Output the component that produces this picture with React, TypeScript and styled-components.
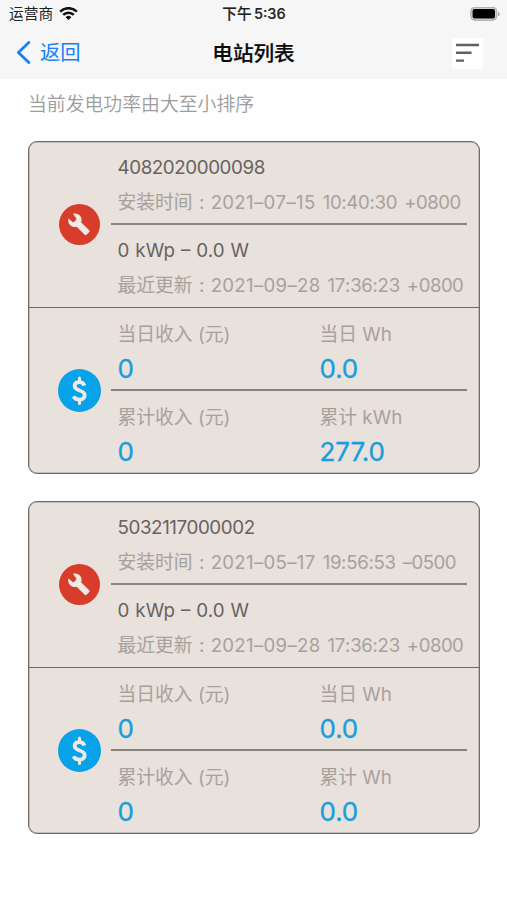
import React from "react";
import styled, { createGlobalStyle } from "styled-components";

const GlobalStyle = createGlobalStyle`
  * { box-sizing: border-box; }
  body {
    margin: 0;
    background: #fefefe;
    font-family: Inter, "Noto Sans CJK SC", sans-serif;
  }
`;

const Screen = styled.div`
  width: 507px;
  height: 900px;
  overflow: hidden;
`;

const Header = styled.header`
  height: 79px;
  background: #f6f6f6;
`;

const StatusBar = styled.div`
  height: 27px;
  padding: 0 7px 0 9px;
  display: grid;
  grid-template-columns: 1fr auto 1fr;
  align-items: center;
  font-size: 14.7px;
  line-height: 27px;
  color: #222;
`;

const Carrier = styled.div`
  display: flex;
  align-items: center;
  gap: 6px;
  font-weight: 400;
`;

const Clock = styled.div`
  font-weight: 500;
  font-size: 14.6px;
  word-spacing: -1.5px;
  line-height: 28px;
  padding-right: 1px;
  -webkit-text-stroke: 0.15px;
`;

const Battery = styled.svg`
  justify-self: end;
`;

const NavBar = styled.nav`
  height: 52px;
  padding: 0 24px 0 16px;
  display: grid;
  grid-template-columns: 1fr auto 1fr;
  align-items: center;
`;

const BackButton = styled.button`
  border: 0;
  padding: 0;
  background: none;
  display: flex;
  align-items: center;
  gap: 9px;
  font: inherit;
  font-size: 20.3px;
  line-height: 30px;
  color: #1580f8;
`;

const Title = styled.h1`
  margin: 0;
  padding: 1px 0 0 8px;
  font-size: 20.6px;
  line-height: 30px;
  font-weight: 500;
  -webkit-text-stroke: 0.2px;
  color: #0a0a0a;
`;

const SortButton = styled.button`
  justify-self: end;
  border: 0;
  padding: 0;
  width: 31px;
  height: 31px;
  background: #fff;
  display: flex;
`;

const Hint = styled.p`
  margin: 13px 0 23px 28px;
  font-size: 18.85px;
  line-height: 26px;
  font-weight: 350;
  color: #9c9c9c;
`;

const Cards = styled.main`
  padding: 0 27px 0 28px;
  display: flex;
  flex-direction: column;
  gap: 27px;
`;

const Card = styled.article`
  height: 333px;
  border: 1px solid #6f6966;
  box-shadow: inset 0 0 0 0.5px #a49d99;
  border-radius: 9px;
  background: #e8e1dc;
  display: grid;
  grid-template-rows: 166px 1fr;
`;

const Section = styled.section<{ $ruled?: boolean }>`
  display: grid;
  grid-template-columns: 82px 1fr;
  padding-right: 12px;
  border-bottom: ${(p) => (p.$ruled ? "1px solid #6f6966" : "0")};
`;

const IconCell = styled.div`
  display: flex;
  align-items: center;
  justify-content: center;
  padding-left: 18px;
`;

const Disc = styled.div<{ $size: number; $color: string }>`
  width: ${(p) => p.$size}px;
  height: ${(p) => p.$size}px;
  flex: none;
  border-radius: 50%;
  background: ${(p) => p.$color};
  color: #f0e9e4;
  display: flex;
  align-items: center;
  justify-content: center;
`;

const Rows = styled.div`
  display: grid;
  grid-template-rows: 83px 1fr;
`;

const Row = styled.div<{ $ruled?: boolean; $split?: boolean }>`
  padding: ${(p) => (p.$split ? 10 : 9)}px 0 0 6.5px;
  display: grid;
  align-content: start;
  grid-template-columns: ${(p) => (p.$split ? "202px 1fr" : "1fr")};
  border-bottom: ${(p) => (p.$ruled ? "2px solid #8b827d" : "0")};
`;

const Line = styled.div<{ $main?: boolean }>`
  height: 34px;
  line-height: 34px;
  font-size: 18.8px;
  font-weight: 400;
  color: ${(p) => (p.$main ? "#68625f" : "#a7a19e")};
  white-space: pre;
`;

const Serial = styled.span`
  letter-spacing: -0.42px;
`;

const Power = styled.span`
  word-spacing: 0.7px;
`;

const Stamp = styled.span`
  display: inline-flex;
  gap: 7px;
  font-size: 18.6px;
  font-kerning: none;
`;

const StampPart = styled.span<{ $spacing: number }>`
  letter-spacing: ${(p) => p.$spacing}px;
`;

const Colon = styled.span`
  display: inline-block;
  width: 18px;
  text-align: center;
`;

const Value = styled.div`
  height: 34px;
  line-height: 34px;
  font-size: 26px;
  font-weight: 400;
  -webkit-text-stroke: 0.35px;
  letter-spacing: -0.1px;
  color: #189ddd;
`;

const WifiIcon = () => (
  <svg width="19" height="14" viewBox="0 0 19 14" fill="none" stroke="#111" strokeWidth="2.5">
    <path d="M1.1 4.6a12 12 0 0 1 16.8 0" />
    <path d="M4.2 7.9a7.6 7.6 0 0 1 10.6 0" />
    <path d="M9.5 13.1 6.6 10.2a4.2 4.2 0 0 1 5.8 0Z" fill="#111" stroke="none" />
  </svg>
);

const BatteryIcon = () => (
  <Battery width="30" height="15" viewBox="0 0 30 15">
    <rect x="0.8" y="0.3" width="26" height="13" rx="4" fill="#d0d0d0" stroke="#a8a8a8" />
    <rect x="2.6" y="2.1" width="22.4" height="9.4" rx="2" fill="#000" />
    <path d="M28 4.7c2.2.6 2.2 4 0 4.6Z" fill="#a8a8a8" />
  </Battery>
);

const BackIcon = () => (
  <svg width="15" height="24" viewBox="0 0 15 24" fill="none" stroke="#1580f8" strokeWidth="2.8" strokeLinecap="round" strokeLinejoin="round">
    <path d="M12.8 1.4 2.4 11.5l10.4 10.1" />
  </svg>
);

const SortIcon = () => (
  <svg width="31" height="31" viewBox="0 0 31 31" stroke="#606060" strokeWidth="2.4">
    <path d="M4 7h23M4 14.8h15.5M4 22.6h8" />
  </svg>
);

const WrenchIcon = () => (
  <svg width="41" height="41" viewBox="0 0 41 41" fill="currentColor">
    <path d="M13.9 9.8c3.2-1 6.7.2 8 3.2.8 1.8.8 3.5.2 5.2l7.9 7.8c.7.7.7 1.5 0 2.2l-2.3 2.4c-.7.7-1.5.7-2.2 0l-7.9-7.9c-2.3.8-4.6.3-6.4-1.4-1.9-1.9-2.5-4.7-1.6-7.1l3.6 3.6c.7.6 1.4.6 2 0l1.8-1.8c.6-.6.6-1.4 0-2Z" />
  </svg>
);

const DollarIcon = () => (
  <svg width="43" height="43" viewBox="0 0 43 43" fill="none" stroke="currentColor" strokeWidth="3.8" strokeLinecap="round">
    <path d="M21.5 9v3.5M21.5 31v3.5" strokeWidth="3" />
    <path d="M26.4 16.7c-.7-2.2-2.3-3.5-5-3.5-3 0-4.8 1.5-4.8 3.9 0 2.6 2.2 3.5 4.9 4.4 3 .9 5.2 2 5.2 4.8 0 2.7-2.2 4.3-5.3 4.3-2.8 0-4.8-1.1-5.7-3.4" strokeLinecap="butt" />
  </svg>
);

type Station = {
  id: string;
  installed: string;
  updated: string;
  totalUnit: string;
  total: string;
};

const stations: Station[] = [
  { id: "4082020000098", installed: "2021–07–15 10:40:30 +0800", updated: "2021–09–28 17:36:23 +0800", totalUnit: "kWh", total: "277.0" },
  { id: "5032117000002", installed: "2021–05–17 19:56:53 –0500", updated: "2021–09–28 17:36:23 +0800", totalUnit: "Wh", total: "0.0" },
];

const Timestamp = ({ value }: { value: string }) => {
  const [date, time, zone] = value.split(" ");
  return (
    <Stamp>
      <StampPart $spacing={0.33}>{date}</StampPart>
      <StampPart $spacing={-0.3}>{time}</StampPart>
      <StampPart $spacing={-0.5}>{zone}</StampPart>
    </Stamp>
  );
};

const Metric = ({ label, value }: { label: string; value: string }) => (
  <div>
    <Line>{label}</Line>
    <Value>{value}</Value>
  </div>
);

const StationCard = ({ station }: { station: Station }) => (
  <Card>
    <Section $ruled>
      <IconCell>
        <Disc $size={41} $color="#d83c2a"><WrenchIcon /></Disc>
      </IconCell>
      <Rows>
        <Row $ruled>
          <Line $main><Serial>{station.id}</Serial></Line>
          <Line>安装时间<Colon>:</Colon><Timestamp value={station.installed} /></Line>
        </Row>
        <Row>
          <Line $main><Power>0 kWp – 0.0 W</Power></Line>
          <Line>最近更新<Colon>:</Colon><Timestamp value={station.updated} /></Line>
        </Row>
      </Rows>
    </Section>
    <Section>
      <IconCell>
        <Disc $size={43} $color="#08a2e9"><DollarIcon /></Disc>
      </IconCell>
      <Rows>
        <Row $ruled $split>
          <Metric label="当日收入 (元)" value="0" />
          <Metric label="当日 Wh" value="0.0" />
        </Row>
        <Row $split>
          <Metric label="累计收入 (元)" value="0" />
          <Metric label={`累计 ${station.totalUnit}`} value={station.total} />
        </Row>
      </Rows>
    </Section>
  </Card>
);

export default function App() {
  return (
    <Screen>
      <GlobalStyle />
      <Header>
        <StatusBar>
          <Carrier>运营商<WifiIcon /></Carrier>
          <Clock>下午 5:36</Clock>
          <BatteryIcon />
        </StatusBar>
        <NavBar>
          <BackButton><BackIcon />返回</BackButton>
          <Title>电站列表</Title>
          <SortButton aria-label="排序"><SortIcon /></SortButton>
        </NavBar>
      </Header>
      <Hint>当前发电功率由大至小排序</Hint>
      <Cards>
        {stations.map((s) => <StationCard key={s.id} station={s} />)}
      </Cards>
    </Screen>
  );
}
